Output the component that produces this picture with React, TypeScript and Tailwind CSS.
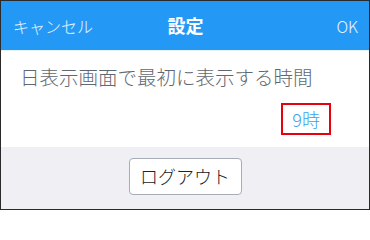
export default function App() {
  return (
    <div
      className="w-[370px] h-[210px] border border-[#2a2a2a] flex flex-col overflow-hidden bg-[#efeff4]"
      style={{ fontFamily: '"Noto Sans CJK JP", "Noto Sans", sans-serif' }}
    >
      <header className="h-[49px] shrink-0 bg-[#2399f5] grid grid-cols-3 items-center pl-3 pr-[11px] text-white">
        <button className="justify-self-start text-[16px] font-light text-white/90">キャンセル</button>
        <h1 className="justify-self-center text-[18px] font-bold">設定</h1>
        <button className="justify-self-end text-[16px] font-light text-white/90">OK</button>
      </header>
      <div className="h-px bg-[#e6f1fb]" />

      <section className="bg-white h-[96px] shrink-0 flex flex-col px-[19px] pt-[12px]">
        <p className="text-[19.5px] leading-[28px] font-light text-[#5f6870]">日表示画面で最初に表示する時間</p>
        <div className="flex justify-end mt-[12px] pr-[19px]">
          <span className="border-2 border-[#e8000f] px-[9px] h-[32px] flex items-center text-[18px] font-light text-[#3a9ff0]">9時</span>
        </div>
      </section>

      <div className="flex-1 flex justify-center pt-[11px]">
        <button className="w-[113px] h-[37px] bg-white border border-[#a5adb8] rounded-[4px] text-[18px] font-light text-[#222] flex items-center justify-center">
          ログアウト
        </button>
      </div>
    </div>
  )
}
